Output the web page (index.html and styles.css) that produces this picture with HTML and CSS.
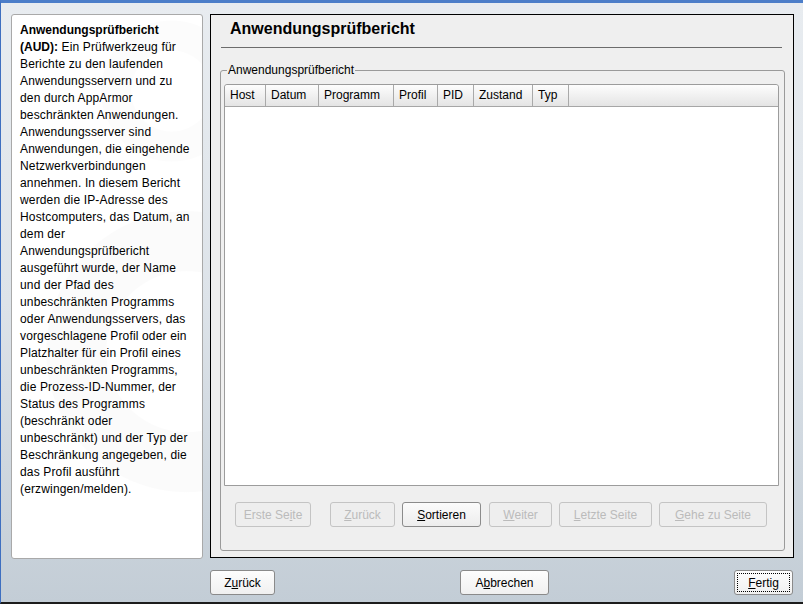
FILE: index.html
```html
<!DOCTYPE html>
<html lang="de">
<head>
<meta charset="utf-8">
<title>Anwendungsprüfbericht</title>
<link rel="stylesheet" href="styles.css">
</head>
<body>
<div class="screen">
  <div class="main">
    <aside class="help">
      <p class="help-text"><b>Anwendungsprüfbericht<br>(AUD):</b> Ein Prüfwerkzeug für<br>Berichte zu den laufenden<br>Anwendungsservern und zu<br>den durch AppArmor<br>beschränkten Anwendungen.<br>Anwendungsserver sind<br>Anwendungen, die eingehende<br>Netzwerkverbindungen<br>annehmen. In diesem Bericht<br>werden die IP-Adresse des<br>Hostcomputers, das Datum, an<br>dem der<br>Anwendungsprüfbericht<br>ausgeführt wurde, der Name<br>und der Pfad des<br>unbeschränkten Programms<br>oder Anwendungsservers, das<br>vorgeschlagene Profil oder ein<br>Platzhalter für ein Profil eines<br>unbeschränkten Programms,<br>die Prozess-ID-Nummer, der<br>Status des Programms<br>(beschränkt oder<br>unbeschränkt) und der Typ der<br>Beschränkung angegeben, die<br>das Profil ausführt<br>(erzwingen/melden).</p>
    </aside>
    <section class="content">
      <h1 class="title">Anwendungsprüfbericht</h1>
      <hr class="rule">
      <fieldset class="group">
        <legend class="legend">Anwendungsprüfbericht</legend>
        <div class="table">
          <div class="thead">
            <div class="th">Host</div>
            <div class="th">Datum</div>
            <div class="th">Programm</div>
            <div class="th">Profil</div>
            <div class="th">PID</div>
            <div class="th">Zustand</div>
            <div class="th">Typ</div>
            <div class="th th-last"></div>
          </div>
          <div class="tbody"></div>
        </div>
        <div class="pager">
          <button class="btn disabled w-erste">Erste Se<u>i</u>te</button>
          <button class="btn disabled w-zurueck"><u>Z</u>urück</button>
          <button class="btn w-sort"><u>S</u>ortieren</button>
          <button class="btn disabled w-weiter"><u>W</u>eiter</button>
          <button class="btn disabled w-letzte"><u>L</u>etzte Seite</button>
          <button class="btn disabled w-gehe"><u>G</u>ehe zu Seite</button>
        </div>
      </fieldset>
    </section>
  </div>
  <div class="footer">
    <button class="btn fbtn f-back">Z<u>u</u>rück</button>
    <button class="btn fbtn f-abort">A<u>b</u>brechen</button>
    <button class="btn fbtn f-done"><span class="focus"><u>F</u>ertig</span></button>
  </div>
</div>
</body>
</html>
```

FILE: styles.css
```css
* { box-sizing: border-box; }
html, body { margin: 0; padding: 0; }
body {
  width: 803px;
  height: 604px;
  overflow: hidden;
  font-family: "Liberation Sans", Arial, sans-serif;
  font-size: 12px;
  color: #000;
}
.screen {
  width: 803px;
  height: 604px;
  display: flex;
  flex-direction: column;
  border-top: 3px solid #4c7ec9;
  border-left: 1px solid #3e6fc0;
  border-bottom: 2px solid #1c1c1c;
  background: linear-gradient(#e8ecf0 0%, #dde3e9 50%, #c3cdd6 100%);
}
.main {
  display: flex;
  gap: 7px;
  padding: 11px 9px 0 10px;
  height: 555px;
}
.help {
  width: 192px;
  height: 545px;
  border: 1px solid #a9a9a9;
  border-radius: 3px;
  background:
    radial-gradient(circle at 92% 62%, rgba(255,255,255,0) 0 80px, rgba(0,0,0,0.014) 81px 140px, rgba(255,255,255,0) 141px),
    radial-gradient(circle at 84% 14%, rgba(255,255,255,0) 0 40px, rgba(0,0,0,0.012) 41px 70px, rgba(255,255,255,0) 71px),
    #ffffff;
  padding: 7px 0 0 8px;
}
.help-text {
  margin: 0;
  line-height: 17px;
  white-space: nowrap;
  font-size: 12px;
  letter-spacing: 0.15px;
}
.help-text b { letter-spacing: 0; }
.content {
  width: 584px;
  height: 544px;
  border: 1px solid #000;
  background: #efefef;
  display: flex;
  flex-direction: column;
}
.title {
  margin: 4px 0 0 19px;
  font-size: 16px;
  line-height: 20px;
  font-weight: bold;
}
.rule {
  margin: 8px 11px 0 10px;
  border: 0;
  border-top: 1px solid #6c6c6c;
  height: 0;
}
.group {
  margin: 15px 8px 0 9px;
  padding: 0 5px 23px 3px;
  border: 1px solid #9a9a9a;
  border-radius: 3px;
  min-width: 0;
}
.legend {
  margin-left: 3px;
  padding: 0 1px;
  line-height: 14px;
  font-size: 12px;
}
.table {
  margin-top: 7px;
  height: 402px;
  border: 1px solid #9c9c9c;
  border-radius: 3px 3px 0 0;
  background: #fff;
  display: flex;
  flex-direction: column;
}
.thead {
  display: grid;
  grid-template-columns: 41px 53px 75px 44px 36px 59px 36px 1fr;
  height: 22px;
  border-bottom: 1px solid #a6a6a6;
  background: linear-gradient(#fdfdfd, #e4e4e4);
  border-radius: 3px 3px 0 0;
}
.th {
  border-right: 1px solid #a9a9a9;
  padding-left: 5px;
  line-height: 21px;
  font-size: 12px;
}
.th-last { border-right: 0; }
.tbody { flex: 1; }
.pager {
  display: flex;
  margin-top: 16px;
  padding-left: 11px;
  gap: 7px;
}
.btn {
  font-family: "Liberation Sans", Arial, sans-serif;
  font-size: 12px;
  height: 25px;
  padding: 0;
  border: 1px solid #8b8b8b;
  border-radius: 3px;
  background: linear-gradient(#fbfbfb, #ededed);
  color: #000;
  display: flex;
  align-items: center;
  justify-content: center;
}
.btn.disabled {
  border-color: #c4c4c4;
  background: #eeeeee;
  color: #bbbbbb;
}
.w-erste { width: 76px; }
.w-zurueck { width: 65px; margin-left: 12px; }
.w-sort { width: 79px; }
.w-weiter { width: 63px; margin-left: 1px; }
.w-letzte { width: 93px; }
.w-gehe { width: 108px; }
.footer {
  flex: 1;
  display: flex;
  justify-content: space-between;
  align-items: flex-start;
  padding: 12px 10px 0 209px;
}
.fbtn {
  background: linear-gradient(#fdfdfd, #f0f0f0);
  border-color: #8a8a8a;
}
.f-back { width: 65px; }
.f-abort { width: 89px; }
.f-done { width: 59px; padding: 2px; }
.focus {
  display: flex;
  align-items: center;
  justify-content: center;
  width: 100%;
  height: 100%;
  border: 1px dotted #000;
}
u { text-decoration: underline; text-underline-offset: 1px; }
```
